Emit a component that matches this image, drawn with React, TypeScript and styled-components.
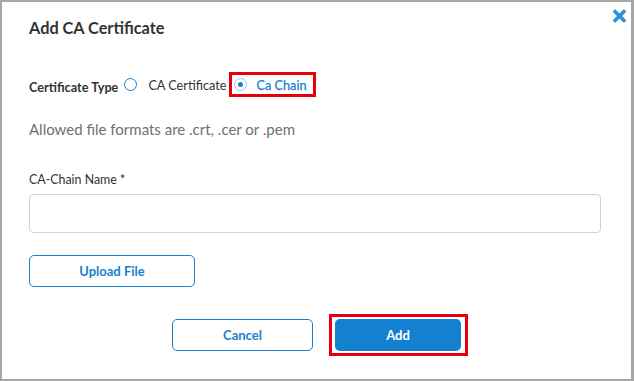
import React from "react";
import styled, { createGlobalStyle } from "styled-components";

const Global = createGlobalStyle`
  html, body { margin: 0; padding: 0; background: #ffffff; }
  body { font-family: Lato, "Open Sans", Arial, sans-serif; }
  * { box-sizing: border-box; }
`;

const Dialog = styled.div`
  position: relative;
  width: 634px;
  height: 381px;
  border: 2px solid #a6a6a6;
  border-right-width: 3px;
  background: #ffffff;
  padding: 16px 30px 0 27px;
  display: flex;
  flex-direction: column;
  color: #333333;
`;

const Title = styled.h1`
  margin: 0;
  font-size: 16.3px;
  line-height: 20px;
  font-weight: 700;
  color: #333333;
`;

const Close = styled.button`
  position: absolute;
  top: 7px;
  right: 5px;
  width: 13px;
  height: 14px;
  padding: 0;
  border: 0;
  background: none;
  cursor: pointer;
  display: flex;
`;

const TypeRow = styled.div`
  margin-top: 34px;
  display: flex;
  align-items: center;
  height: 25px;
`;

const TypeLabel = styled.span`
  font-size: 12.7px;
  line-height: 16px;
  font-weight: 700;
  margin-top: 5px;
  margin-right: 6px;
`;

const Option = styled.label<{ $highlight?: boolean }>`
  display: flex;
  align-items: center;
  gap: ${(p) => (p.$highlight ? "10px" : "11px")};
  height: 25px;
  font-size: 12.7px;
  line-height: 16px;
  cursor: pointer;
  color: ${(p) => (p.$highlight ? "#1a7fce" : "#333333")};
  border: ${(p) => (p.$highlight ? "3px solid #e5000b" : "0")};
  padding: ${(p) => (p.$highlight ? "0 6px 0 2px" : "0")};
  margin-left: ${(p) => (p.$highlight ? "2px" : "0")};
  -webkit-text-stroke: ${(p) => (p.$highlight ? "0.25px #1a7fce" : "0")};
`;

const Radio = styled.span<{ $checked?: boolean }>`
  width: 13px;
  height: 13px;
  border-radius: 50%;
  flex: none;
  margin-top: -1px;
  border: ${(p) => (p.$checked ? "1px solid #9fc3df" : "1.5px solid #1a7fce")};
  display: flex;
  align-items: center;
  justify-content: center;
  &::after {
    content: "";
    display: ${(p) => (p.$checked ? "block" : "none")};
    width: 5px;
    height: 5px;
    border-radius: 50%;
    background: #1a7fce;
  }
`;

const Hint = styled.p`
  margin: 23px 0 0;
  font-size: 15px;
  line-height: 18px;
  color: #707070;
`;

const FieldLabel = styled.label`
  margin-top: 34px;
  font-size: 12.4px;
  line-height: 16px;
  color: #333333;
`;

const Input = styled.input`
  margin-top: 6px;
  width: 572px;
  height: 39px;
  border: 1px solid #d2d2d2;
  border-radius: 4px;
  outline: none;
  padding: 0 10px;
  font-family: inherit;
  font-size: 13px;
`;

const OutlineButton = styled.button<{ $width: number }>`
  width: ${(p) => p.$width}px;
  height: 32px;
  border: 1.5px solid #1a7fce;
  border-radius: 5px;
  background: #ffffff;
  color: #1a7fce;
  font-family: inherit;
  font-weight: 700;
  font-size: 13px;
  cursor: pointer;
`;

const UploadWrap = styled.div`
  margin-top: 22px;
  display: flex;
`;

const Footer = styled.div`
  margin-top: 27px;
  display: flex;
  justify-content: center;
  align-items: center;
  gap: 16px;
  padding-left: 10px;
`;

const Highlight = styled.div`
  border: 3px solid #e5000b;
  padding: 2px 4px 2px 3px;
  display: flex;
`;

const PrimaryButton = styled.button`
  width: 126px;
  height: 32px;
  border: 0;
  border-radius: 5px;
  background: #1380d0;
  color: #ffffff;
  font-family: inherit;
  font-weight: 700;
  font-size: 13px;
  cursor: pointer;
`;

export default function App() {
  return (
    <>
      <Global />
      <Dialog>
        <Title>Add CA Certificate</Title>
        <Close aria-label="Close">
          <svg width="13" height="14" viewBox="0 0 13 14">
            <path
              d="M2 2.5 L11 11.5 M11 2.5 L2 11.5"
              stroke="#2c8fd6"
              strokeWidth="3.6"
              strokeLinecap="round"
              fill="none"
            />
          </svg>
        </Close>
        <TypeRow>
          <TypeLabel>Certificate Type</TypeLabel>
          <Option>
            <Radio />
            CA Certificate
          </Option>
          <Option $highlight>
            <Radio $checked />
            Ca Chain
          </Option>
        </TypeRow>
        <Hint>Allowed file formats are .crt, .cer or .pem</Hint>
        <FieldLabel>CA-Chain Name *</FieldLabel>
        <Input />
        <UploadWrap>
          <OutlineButton $width={166}>Upload File</OutlineButton>
        </UploadWrap>
        <Footer>
          <OutlineButton $width={141}>Cancel</OutlineButton>
          <Highlight>
            <PrimaryButton>Add</PrimaryButton>
          </Highlight>
        </Footer>
      </Dialog>
    </>
  );
}
